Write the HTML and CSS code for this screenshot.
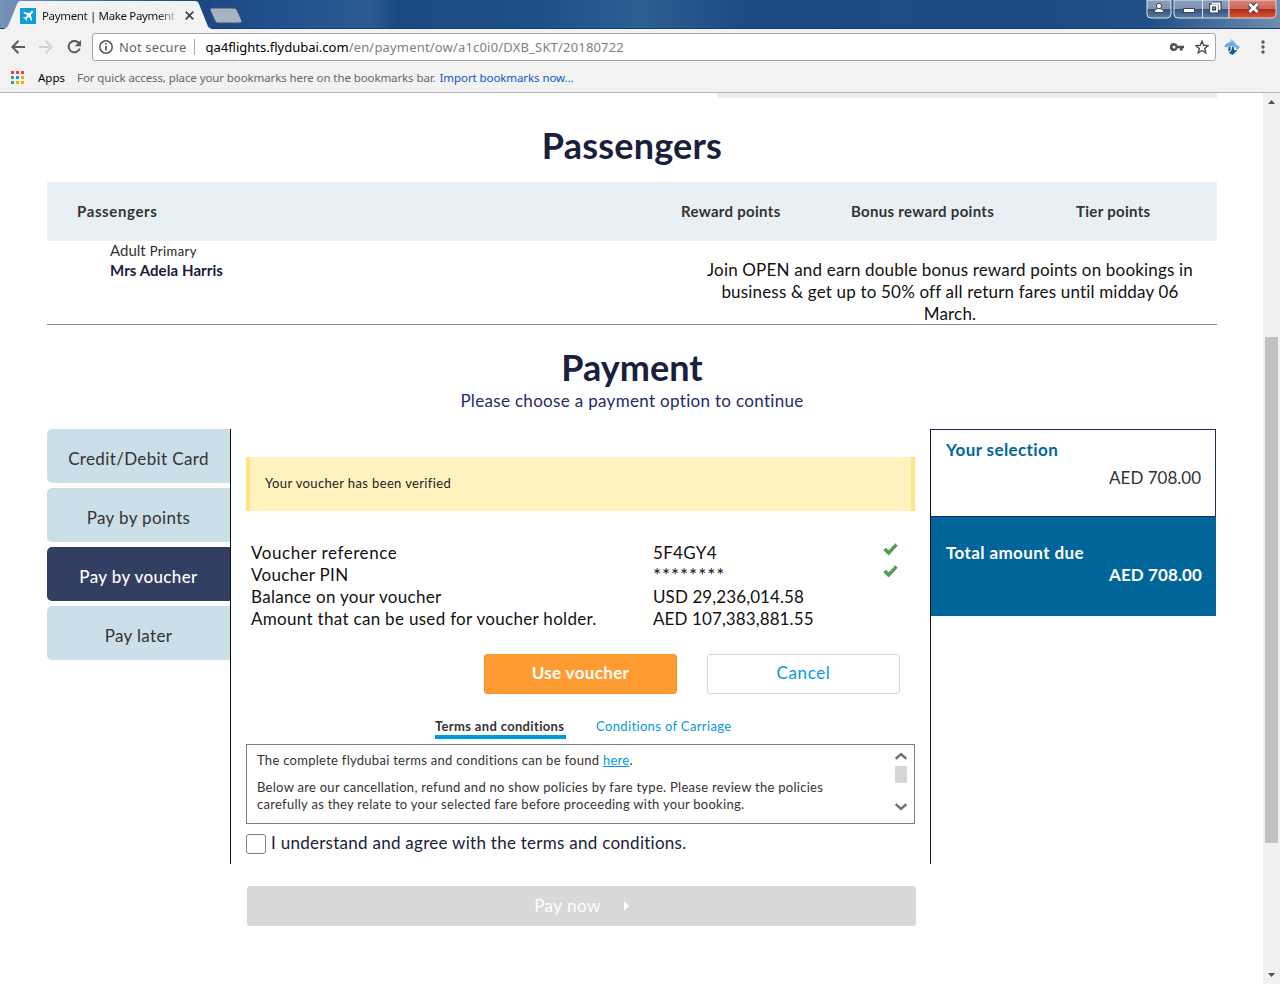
FILE: index.html
```html
<!DOCTYPE html>
<html lang="en">
<head>
<meta charset="utf-8">
<title>Payment | Make Payment</title>
<link rel="stylesheet" href="styles.css">
</head>
<body>
<div class="browser">
  <header class="titlebar">
    <svg class="frame" width="1280" height="29" viewBox="0 0 1280 29">
      <defs>
        <linearGradient id="sky" x1="0" x2="1" y1="0" y2="0">
          <stop offset="0" stop-color="#7893b9"/><stop offset=".02" stop-color="#6a88b3"/><stop offset=".15" stop-color="#1b4580"/><stop offset=".21" stop-color="#20508c"/><stop offset=".29" stop-color="#2b5a94"/><stop offset=".31" stop-color="#1a4a80"/><stop offset=".42" stop-color="#1d5088"/><stop offset=".5" stop-color="#2c5f92"/><stop offset=".58" stop-color="#1c4b83"/><stop offset=".82" stop-color="#1d4a82"/><stop offset=".9" stop-color="#214f87"/><stop offset="1" stop-color="#6f8eb0"/>
        </linearGradient>
        <linearGradient id="glass" x1="0" x2="0" y1="0" y2="1"><stop offset="0" stop-color="#8a9fba"/><stop offset=".48" stop-color="#7f95b3"/><stop offset=".5" stop-color="#35527c"/><stop offset="1" stop-color="#5a7a9e"/></linearGradient>
        <linearGradient id="red" x1="0" x2="0" y1="0" y2="1"><stop offset="0" stop-color="#d9877a"/><stop offset=".48" stop-color="#c9695a"/><stop offset=".5" stop-color="#b02a14"/><stop offset="1" stop-color="#d4593c"/></linearGradient>
      </defs>
      <rect width="1280" height="29" fill="url(#sky)"/>
      <rect y="28" width="1280" height="1" fill="#173a6a"/>
      <path d="M4 29C7 28 8 26 9 24L17 4Q18 1 21 1H195Q198 1 199 4L207 24C208 27 209 28 212 29Z" fill="#f2f2f2"/>
      <path d="M212 8H233Q236 8 237 10L242 21Q242 23 240 23H218Q216 23 215 21L210 10Q210 8 212 8Z" fill="#a8b3c1" stroke="#32547f"/>
      <path d="M1147 0V14Q1147 18 1151 18H1167Q1171 18 1171 14V0Z" fill="url(#glass)" stroke="#dbe4ee"/>
      <path d="M1174 0V14Q1174 18 1178 18H1229V0Z" fill="url(#glass)" stroke="#dbe4ee"/>
      <path d="M1229 0V18H1272Q1276 18 1276 14V0Z" fill="url(#red)" stroke="#ead5d3"/>
      <path d="M1202.500 0V17.500" stroke="#dbe4ee"/>
      <g fill="#fff" stroke="#39465c"><circle cx="1159" cy="6" r="2.600"/><path d="M1154.500 12.500V11Q1155 8.500 1159 8.500T1163.500 11V12.500Z"/><rect x="1183.500" y="8.500" width="11" height="4"/></g>
      <g fill="none" stroke="#39465c" stroke-width="4"><path d="M1212 3.500H1219.500V10"/><rect x="1211" y="5.500" width="6" height="6"/></g>
      <g fill="none" stroke="#fff" stroke-width="1.800"><path d="M1212 3.500H1219.500V10"/><rect x="1211" y="5.500" width="6" height="6"/></g>
      <path d="M1249.500 4L1257.500 12M1257.500 4L1249.500 12" stroke="#46394d" stroke-width="5"/><path d="M1249.500 4L1257.500 12M1257.500 4L1249.500 12" stroke="#fff" stroke-width="3"/>
    </svg>
    <div class="tab">
      <svg width="16" height="16" viewBox="0 0 16 16"><rect width="16" height="16" fill="#109dd9"/><path d="M13 3Q12 2.500 11 3.500L9.300 5.300L4 4L3.200 4.800L7.300 7.200L5.500 9.200L3.800 9L3 9.800L5.300 10.800L6.300 13L7 12.200L6.900 10.600L8.900 8.800L11.300 12.900L12.100 12L10.800 6.800L12.500 5Q13.500 4 13 3Z" fill="#fff"/></svg>
      <span class="tab-title">Payment | Make Payment</span>
      <svg width="9" height="9" viewBox="0 0 9 9"><path d="M.7.700L8.300 8.300M8.300.700L.7 8.300" stroke="#444" stroke-width="1.700"/></svg>
    </div>
  </header>
  <nav class="toolbar">
    <svg class="back" width="14" height="14" viewBox="0 0 14 14" fill="none" stroke="#5a5a5e" stroke-width="2"><path d="M14 7H1.500M7.500 .8L1.300 7L7.500 13.200"/></svg>
    <svg class="fwd" width="14" height="14" viewBox="0 0 14 14" fill="none" stroke="#d3d3d3" stroke-width="2"><path d="M0 7H12.500M6.500 .8L12.700 7L6.500 13.200"/></svg>
    <svg class="reload" width="15" height="14" viewBox="0 0 15 14"><path d="M11.900 3.200A5.700 5.700 0 1 0 12.700 8.600" fill="none" stroke="#5a5a5e" stroke-width="2"/><path d="M14 0V6.200H7.800Z" fill="#5a5a5e"/></svg>
    <div class="omnibox">
      <svg width="14" height="14" viewBox="0 0 14 14"><circle cx="7" cy="7" r="6.200" fill="none" stroke="#555" stroke-width="1.500"/><path d="M6.200 3.300h1.600v1.500H6.200zM6.200 6h1.600v4.600H6.200z" fill="#444"/></svg>
      <span class="insecure">Not secure</span>
      <span class="url"><span class="host">qa4flights.flydubai.com</span><span class="path">/en/payment/ow/a1c0i0/DXB_SKT/20180722</span></span>
      <svg class="key" width="14" height="8" viewBox="0 0 14 8"><path d="M4 0A4 4 0 1 0 7.600 5.300H9.800V7.500H12.600V5.300H14V2.700H7.600A4 4 0 0 0 4 0ZM4 2.500A1.500 1.500 0 1 1 4 5.500A1.500 1.500 0 1 1 4 2.500Z" fill="#505050" fill-rule="evenodd"/></svg>
      <svg class="star" width="14" height="14" viewBox="0 0 14 14"><path d="M7 1.200L8.700 5.300L13.100 5.600L9.700 8.500L10.800 12.900L7 10.500L3.200 12.900L4.300 8.500L.9 5.600L5.300 5.300Z" fill="none" stroke="#505050" stroke-width="1.400"/></svg>
    </div>
    <svg class="ext" width="16" height="16" viewBox="0 0 16 16"><path d="M7.500 0L12.500 4.500L3.500 5.500Z" fill="#8dc2e4"/><path d="M3.500 4L8 3L16 8L13 11L11.500 8L6 7L2 8.500L0 7Z" fill="#66abd9"/><path d="M4.500 8.500L5 7.500L6.500 7.800V11L4.500 13ZM8 7.800L10 8.200V11.200L13.500 11L8.500 16L4.500 13.500Q8 13 8 7.800Z" fill="#14598c"/></svg>
    <svg class="menu" width="4" height="14" viewBox="0 0 4 14" fill="#5a5a5e"><circle cx="2" cy="2" r="1.700"/><circle cx="2" cy="7" r="1.700"/><circle cx="2" cy="12" r="1.700"/></svg>
  </nav>
  <div class="bookmarks">
    <svg width="13" height="13" viewBox="0 0 13 13"><path d="M0 0h3v3H0zM5 0h3v3H5zM10 0h3v3h-3z" fill="#ea4335"/><path d="M0 5h3v3H0zM0 10h3v3H0z" fill="#34a853"/><path d="M5 5h3v3H5z" fill="#1a8cff"/><path d="M10 5h3v3h-3zM5 10h3v3H5zM10 10h3v3h-3z" fill="#f9ab00"/></svg>
    <span class="apps">Apps</span><span class="hint">For quick access, place your bookmarks here on the bookmarks bar.</span><span class="import">Import bookmarks now...</span>
  </div>
  <div class="viewport">
    <main class="page">
      <div class="prev-panel"></div>
      <h1 class="heading">Passengers</h1>
      <section class="passengers">
        <div class="thead"><span class="col-name">Passengers</span><span>Reward points</span><span>Bonus reward points</span><span>Tier points</span></div>
        <div class="prow">
          <div class="who"><div class="kind">Adult<small>Primary</small></div><div class="name">Mrs Adela Harris</div></div>
          <p class="promo">Join OPEN and earn double bonus reward points on bookings in<br>business &amp; get up to 50% off all return fares until midday 06<br>March.</p>
        </div>
      </section>
      <h1 class="heading pay-heading">Payment</h1>
      <p class="sub">Please choose a payment option to continue</p>
      <div class="columns">
        <ul class="methods">
          <li>Credit/Debit Card</li><li>Pay by points</li><li class="active">Pay by voucher</li><li>Pay later</li>
        </ul>
        <section class="voucher">
          <div class="alert">Your voucher has been verified</div>
          <div class="details">
            <div class="drow"><span class="wide">Voucher reference</span><span>5F4GY4</span><svg width="15" height="13" viewBox="0 0 15 13"><path d="M.3 7.200L3 4.700L5.700 7.300L12.300.3L14.700 2.700L5.700 12.500Z" fill="#559e59"/></svg></div>
            <div class="drow"><span>Voucher PIN</span><span class="stars">********</span><svg width="15" height="13" viewBox="0 0 15 13"><path d="M.3 7.200L3 4.700L5.700 7.300L12.300.3L14.700 2.700L5.700 12.500Z" fill="#559e59"/></svg></div>
            <div class="drow"><span>Balance on your voucher</span><span class="value">USD 29,236,014.58</span></div>
            <div class="drow"><span>Amount that can be used for voucher holder.</span><span class="value">AED 107,383,881.55</span></div>
          </div>
          <div class="actions"><button class="use">Use voucher</button><button class="cancel">Cancel</button></div>
          <div class="tabs"><span class="on">Terms and conditions</span><span class="off">Conditions of Carriage</span></div>
          <div class="terms">
            <div class="terms-text"><p>The complete flydubai terms and conditions can be found <a>here</a>.</p><p class="policy">Below are our cancellation, refund and no show policies by fare type. Please review the policies<br>carefully as they relate to your selected fare before proceeding with your booking.</p></div>
            <div class="mini-scroll"><svg width="12" height="8" viewBox="0 0 12 8"><path d="M.7 6.800L6 2L11.300 6.800" fill="none" stroke="#707070" stroke-width="2.400"/></svg><i></i><svg width="12" height="8" viewBox="0 0 12 8"><path d="M.7 1.200L6 6L11.300 1.200" fill="none" stroke="#707070" stroke-width="2.400"/></svg></div>
          </div>
          <label class="agree"><i></i><span>I understand and agree with the terms and conditions.</span></label>
        </section>
        <aside class="summary">
          <div class="selection"><h2>Your selection</h2><div class="amount">AED 708.00</div></div>
          <div class="total"><h2>Total amount due</h2><div class="amount">AED 708.00</div></div>
        </aside>
      </div>
      <button class="paynow"><span>Pay now</span><svg width="5" height="10" viewBox="0 0 5 10"><path d="M0 0L5 5L0 10Z" fill="#fff"/></svg></button>
    </main>
    <div class="scrollbar"><svg width="7" height="4" viewBox="0 0 7 4"><path d="M0 4L3.500 0L7 4Z" fill="#505050"/></svg><i></i><svg width="7" height="4" viewBox="0 0 7 4"><path d="M0 0L3.500 4L7 0Z" fill="#505050"/></svg></div>
  </div>
</div>
</body>
</html>
```
FILE: styles.css
```css
* { box-sizing: border-box; }
body { margin: 0; background: #fff; color: #111; font: 17px/22px Lato, "Noto Sans", sans-serif; font-variant-ligatures: none; }
h1, h2, p, ul { margin: 0; padding: 0; }
svg { display: block; flex: none; }
span { white-space: nowrap; }
button { font: inherit; padding: 0; border: 0; border-radius: 3px; }
.browser { width: 1280px; height: 984px; display: flex; flex-direction: column; overflow: hidden; }

/* Browser chrome */
.titlebar, .toolbar, .bookmarks { font-family: "Noto Sans", "Open Sans", sans-serif; flex: none; }
.titlebar { height: 29px; position: relative; }
.frame { position: absolute; left: 0; top: 0; }
.tab { position: relative; display: flex; align-items: center; padding: 2px 0 0 20px; height: 29px; font-size: 11.5px; }
.tab-title { width: 134px; margin: 0 9px 0 6px; letter-spacing: -.35px; color: transparent; background: linear-gradient(90deg, #111 86%, #ccc 100%); -webkit-background-clip: text; background-clip: text; }
.toolbar { height: 35px; background: #f2f2f2; display: flex; align-items: center; padding: 1px 0 0 11px; }
.fwd { margin-left: 14px; }
.reload { margin-left: 14px; }
.omnibox { width: 1124px; height: 28px; margin-left: 10px; background: #fff; border: 1px solid #a6a6a6; border-radius: 3px; display: flex; align-items: center; padding-left: 6px; font-size: 13px; color: #808080; }
.insecure { margin-left: 6px; color: #666; letter-spacing: .13px; }
.url { margin-left: 8px; padding-left: 10px; line-height: 16px; border-left: 1px solid #aaa; display: flex; }
.host { color: #000; }
.path { letter-spacing: .18px; }
.key { margin: 0 11px 0 auto; }
.star { margin-right: 6px; }
.ext { margin-left: 8px; }
.menu { margin-left: 21px; }
.bookmarks { height: 29px; background: #f2f2f2; border-bottom: 1px solid #b6b6b6; display: flex; align-items: center; padding: 0 0 1px 11px; font-size: 11.5px; color: #666; }
.apps { margin-left: 14px; color: #000; }
.hint { margin-left: 12px; letter-spacing: -.1px; }
.import { margin-left: 4px; color: #1155cc; letter-spacing: -.085px; }

/* Page */
.viewport { flex: 1; display: flex; }
.page { width: 1263px; padding: 0 46px 0 47px; }
.prev-panel { width: 500px; height: 5px; margin-left: auto; background: #e8eff3; }
.heading { font-size: 36px; line-height: 44px; font-weight: 700; letter-spacing: .2px; color: #19203b; text-align: center; padding-top: 25px; height: 84px; }
.thead { height: 59px; background: #e8f0f3; color: #333; font-size: 15px; font-weight: 700; line-height: 58px; letter-spacing: .3px; display: grid; grid-template-columns: 604px 170px 225px auto; padding-left: 30px; }
.col-name { letter-spacing: .62px; }
.prow { height: 84px; border-bottom: 1px solid #888; display: flex; justify-content: space-between; }
.who { padding-left: 63px; line-height: 19px; }
.kind { font-size: 15px; color: #333; }
.kind small { font-size: 13px; margin-left: 4px; color: #222; letter-spacing: .45px; }
.name { font-size: 15px; font-weight: 700; color: #19203b; letter-spacing: .08px; }
.promo { width: 536px; padding: 18px 24px 0; margin-right: -1px; text-align: center; letter-spacing: .18px; }
.pay-heading { padding-top: 20px; height: 65px; letter-spacing: 0; }
.sub { text-align: center; color: #1d2b66; letter-spacing: .32px; }
.columns { display: flex; margin-top: 17px; height: 435px; }
.methods { width: 183px; list-style: none; display: flex; flex-direction: column; gap: 5px; }
.methods li { height: 54px; background: #cadfe7; border-radius: 5px 0 0 5px; text-align: center; line-height: 59px; color: #333; letter-spacing: .36px; }
.methods .active { background: #333e63; color: #fff; font-weight: 500; }
.voucher { width: 701px; border: solid #111; border-width: 0 1px; padding: 28px 15px 0; }
.alert { height: 54px; background: #fff2bf; border: solid #ffe680; border-width: 0 4px; padding-left: 15px; line-height: 53px; font-size: 13px; color: #222; letter-spacing: .37px; }
.details { padding: 31px 0 0 5px; letter-spacing: .31px; }
.drow { display: grid; grid-template-columns: 402px 230px 15px; height: 22px; }
.drow svg { margin-top: 1px; }
.wide { letter-spacing: .56px; }
.value { letter-spacing: .1px; }
.stars { font-size: 19px; letter-spacing: .95px; }
.actions { display: flex; justify-content: flex-end; gap: 30px; padding: 24px 15px 0 0; }
.actions button { width: 193px; height: 40px; padding-bottom: 2px; }
.use { background: #ff9b33; color: #fff; font-weight: 700; border: 1px solid #f7922b; letter-spacing: .35px; }
.cancel { background: #fff; color: #009ae0; border: 1px solid #d6d6d6; letter-spacing: .6px; }
.tabs { display: flex; gap: 30px; padding: 22px 0 0 189px; height: 50px; font-size: 13px; line-height: 21px; }
.on { width: 131px; height: 23px; border-bottom: 4px solid #009ae0; font-weight: 700; color: #333; letter-spacing: .34px; }
.off { color: #009ae0; letter-spacing: .36px; }
.terms { width: 669px; height: 80px; border: 1px solid #808080; display: flex; justify-content: space-between; padding: 7px 7px 0 10px; font-size: 13px; line-height: 17px; color: #333; letter-spacing: .28px; white-space: nowrap; }
.terms p { margin-bottom: 10px; }
.terms a { color: #009ae0; text-decoration: underline; }
.mini-scroll { width: 12px; }
.mini-scroll i { display: block; height: 17px; margin: 6px 0 20px; background: #d6d6d6; }
.agree { display: flex; align-items: center; gap: 5px; margin-top: 8px; color: #19203b; letter-spacing: .27px; }
.agree i { width: 20px; height: 20px; margin-top: 2px; border: 1px solid #808080; border-radius: 3px; }
.summary { width: 285px; }
.selection { height: 88px; border: solid #1a2a6c; border-width: 1px 1px 1px 0; padding: 9px 14px 0 15px; }
.summary h2 { font-size: 17px; line-height: 22px; font-weight: 700; letter-spacing: .4px; }
.summary .amount { text-align: right; }
.selection h2 { color: #006699; margin-bottom: 6px; }
.selection .amount { color: #333; }
.total { height: 99px; background: #006699; color: #fff; padding: 25px 14px 0 15px; font-weight: 700; }
.total .amount { letter-spacing: .1px; }
.paynow { width: 669px; height: 40px; margin: 22px 0 0 200px; padding-bottom: 1px; background: #d8d8d8; color: #fff; letter-spacing: .5px; display: flex; align-items: center; justify-content: center; gap: 23px; }

/* Window scrollbar */
.scrollbar { width: 17px; background: #f1f1f1; padding: 7px 2px 7px; display: flex; flex-direction: column; }
.scrollbar svg { margin: 0 auto 0 3px; }
.scrollbar i { height: 506px; margin: 233px 0 auto; background: #c1c1c1; }
```
